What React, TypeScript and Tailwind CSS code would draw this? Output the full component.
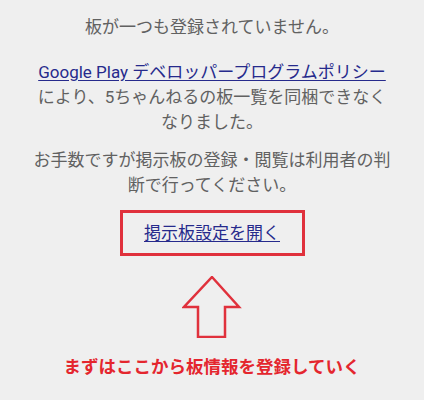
export default function App() {
  return (
    <div
      className="w-[424px] h-[400px] bg-[#efefef] flex flex-col items-center text-[17px] leading-[25px] text-[#616161]"
      style={{ fontFamily: "Roboto, 'Noto Sans CJK JP', sans-serif" }}
    >
      <p className="mt-[15px] whitespace-nowrap">板が一つも登録されていません。</p>

      <div className="mt-[20px] text-center whitespace-nowrap">
        <a href="#" className="text-[#262a8c] underline underline-offset-2">
          Google Play デベロッパープログラムポリシー
        </a>
        <br />
        により、5ちゃんねるの板一覧を同梱できなく
        <br />
        なりました。
      </div>

      <div className="mt-[13px] text-center whitespace-nowrap">
        お手数ですが掲示板の登録・閲覧は利用者の判
        <br />
        断で行ってください。
      </div>

      <div className="mt-[12px] w-[185px] h-[46px] border-[3px] border-[#e0313c] flex items-center justify-center">
        <a href="#" className="text-[#262a8c] underline underline-offset-2 whitespace-nowrap">
          掲示板設定を開く
        </a>
      </div>

      <svg className="mt-[20px]" width="60" height="62" viewBox="0 0 60 62">
        <path
          d="M30 1 L57 31 L43 31 L43 61 L16 61 L16 31 L2 31 Z"
          fill="none"
          stroke="#e0313c"
          strokeWidth="2.5"
          strokeLinejoin="miter"
        />
      </svg>

      <p className="mt-[17px] whitespace-nowrap font-bold text-[#e4262e] text-[17.5px]">
        まずはここから板情報を登録していく
      </p>
    </div>
  );
}
